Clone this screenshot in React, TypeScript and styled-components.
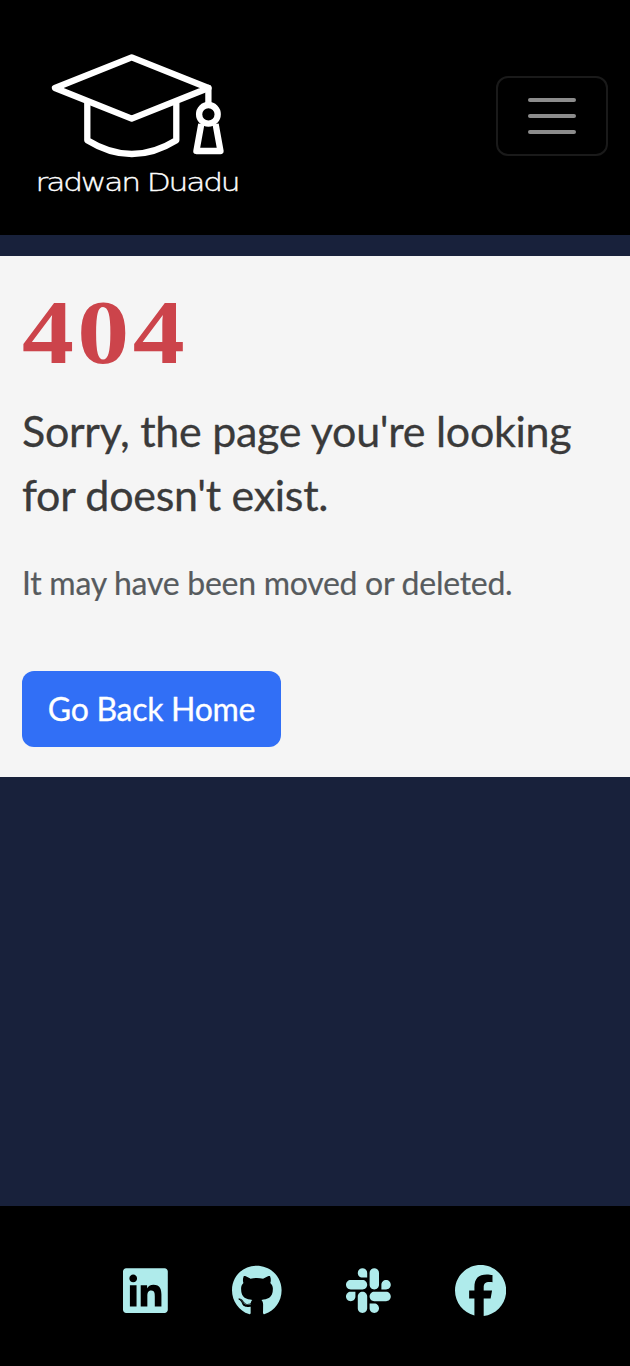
import React from "react";
import styled, { createGlobalStyle } from "styled-components";
import { FaFacebook, FaGithub, FaLinkedin, FaSlack } from "react-icons/fa6";

const GlobalStyle = createGlobalStyle`
  * { box-sizing: border-box; }
  body { margin: 0; background: #18213b; font-family: Lato, sans-serif; }
`;

const Page = styled.div`
  display: flex;
  flex-direction: column;
  min-height: 1366px;
  background: #18213b;
`;

const Header = styled.header`
  display: flex;
  align-items: center;
  justify-content: space-between;
  height: 235px;
  padding: 0 22px 3px 20px;
  background: #000;
`;

const Logo = styled.svg`
  display: block;
  width: 240px;
  height: 170px;
  margin-top: 18px;
`;

const Wordmark = styled.text`
  font-family: "DejaVu Sans Light", "DejaVu Sans", sans-serif;
  font-weight: 200;
  font-size: 25.5px;
  letter-spacing: -1.8px;
  fill: #fff;
  stroke: #fff;
  stroke-width: 0.35px;
`;

const MenuButton = styled.button`
  display: flex;
  flex-direction: column;
  align-items: center;
  justify-content: center;
  gap: 12px;
  width: 112px;
  height: 80px;
  padding: 0;
  border: 2px solid #1a1a1a;
  border-radius: 12px;
  background: transparent;
`;

const MenuBar = styled.span`
  width: 48px;
  height: 4px;
  border-radius: 2px;
  background: #8c8c8c;
`;

const Main = styled.main`
  height: 521px;
  margin-top: 21px;
  padding: 32px 22px 0;
  background: #f5f5f5;
`;

const Code = styled.h1`
  width: max-content;
  margin: 0;
  font-family: "Liberation Serif", serif;
  font-size: 92px;
  font-weight: 700;
  line-height: 88px;
  letter-spacing: 3px;
  color: #cc444b;
  transform: scaleX(1.13);
  transform-origin: left;
`;

const Message = styled.p`
  margin: 23px 0 0;
  font-size: 43px;
  line-height: 64px;
  letter-spacing: -0.29px;
  color: #3a3a3a;
  -webkit-text-stroke: 0.3px #3a3a3a;
`;

const Detail = styled.p`
  margin: 32px 0 0;
  font-size: 32px;
  line-height: 48px;
  letter-spacing: -0.27px;
  color: #575b5e;
  -webkit-text-stroke: 0.2px #575b5e;
`;

const HomeLink = styled.a`
  display: flex;
  align-items: center;
  justify-content: center;
  width: 259px;
  height: 76px;
  margin-top: 64px;
  padding-bottom: 1px;
  border-radius: 12px;
  background: #316ff6;
  color: #fff;
  font-size: 32px;
  letter-spacing: -0.3px;
  -webkit-text-stroke: 0.3px #fff;
`;

const Footer = styled.footer`
  display: flex;
  align-items: center;
  justify-content: center;
  gap: 64px;
  height: 160px;
  margin-top: auto;
  padding: 10px 1px 0 0;
  background: #000;
  color: #afebeb;
`;

const SocialLink = styled.a<{ $width: number }>`
  display: flex;

  svg {
    width: ${({ $width }) => $width}px;
    height: 51.2px;
  }
`;

export default function App() {
  return (
    <Page>
      <GlobalStyle />
      <Header>
        <Logo viewBox="20 40 240 170" role="img" aria-label="radwan Duadu">
          <g fill="none" stroke="#fff" strokeWidth="6.3" strokeLinejoin="round" strokeLinecap="round">
            <path d="M131.7 57.3 55 88l76.7 30.7L208.4 88Z" />
            <path d="M87.3 103v37.2q44.5 27.6 89 0V103" strokeLinecap="butt" />
            <path d="M208.4 88v16" />
            <circle cx="208.4" cy="114.3" r="9.3" />
            <path d="m201.3 124-4.9 27h24.1l-4.9-27" strokeLinecap="butt" />
          </g>
          <Wordmark x="35.5" y="191" textLength="203" lengthAdjust="spacingAndGlyphs">
            radwan Duadu
          </Wordmark>
        </Logo>
        <MenuButton aria-label="Toggle navigation">
          <MenuBar />
          <MenuBar />
          <MenuBar />
        </MenuButton>
      </Header>
      <Main>
        <Code>404</Code>
        <Message>Sorry, the page you're looking for doesn't exist.</Message>
        <Detail>It may have been moved or deleted.</Detail>
        <HomeLink>Go Back Home</HomeLink>
      </Main>
      <Footer>
        <SocialLink $width={44.8} aria-label="LinkedIn"><FaLinkedin /></SocialLink>
        <SocialLink $width={49.6} aria-label="GitHub"><FaGithub /></SocialLink>
        <SocialLink $width={44.8} aria-label="Slack"><FaSlack /></SocialLink>
        <SocialLink $width={51.2} aria-label="Facebook"><FaFacebook /></SocialLink>
      </Footer>
    </Page>
  );
}
